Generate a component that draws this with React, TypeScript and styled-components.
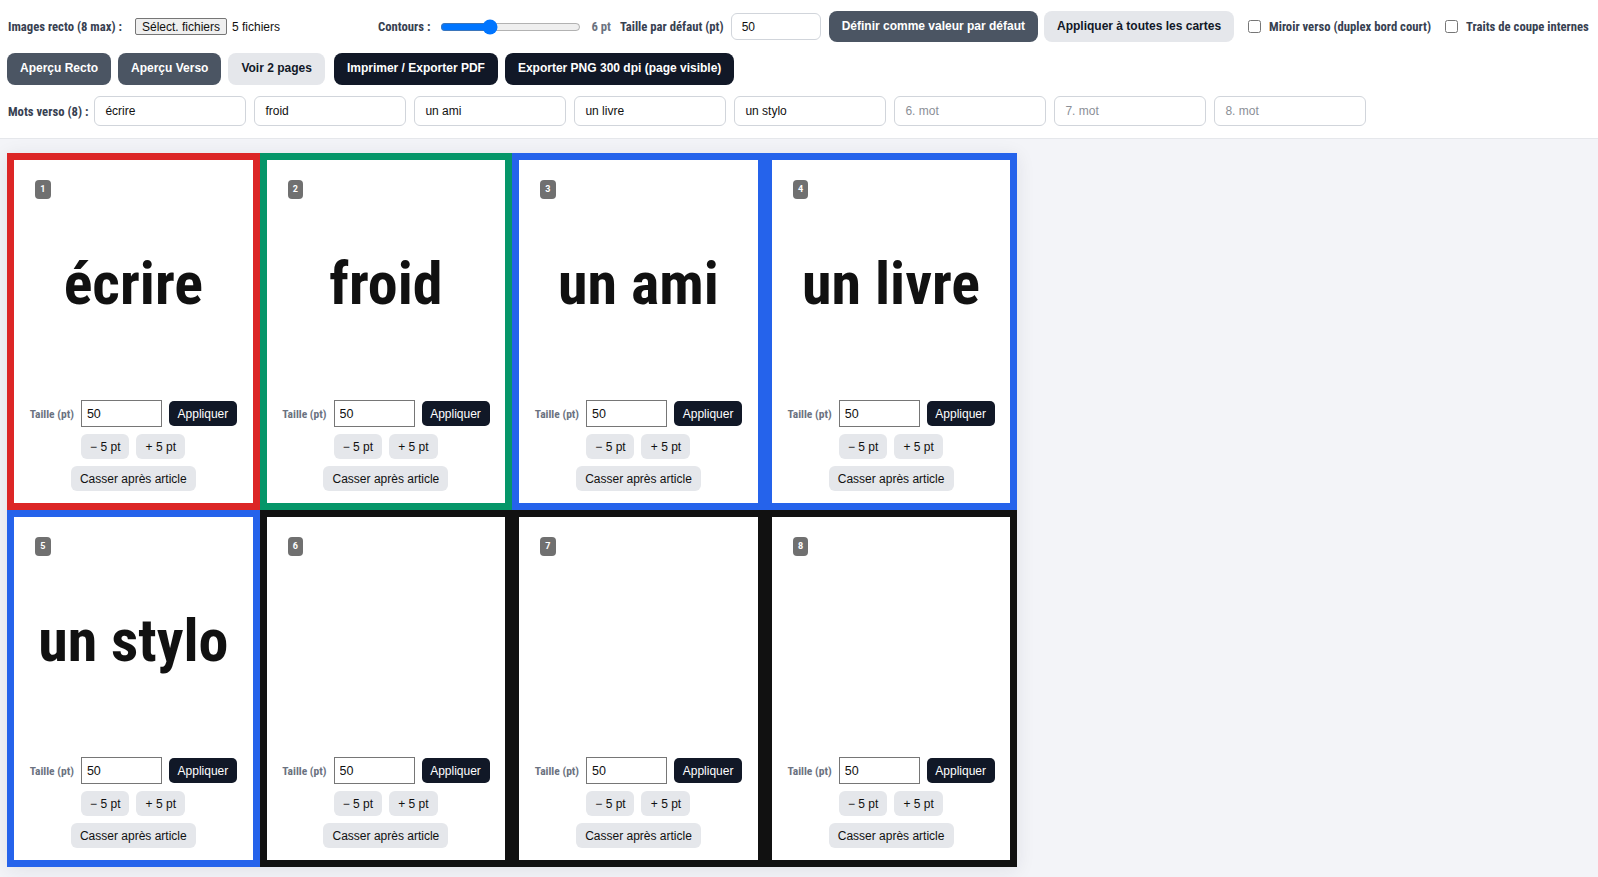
import React from "react";
import styled, { createGlobalStyle } from "styled-components";

const GlobalStyle = createGlobalStyle`
  html, body { margin: 0; padding: 0; }
  body {
    background: #f3f4f8;
    font-family: "Roboto Condensed", "Liberation Sans Narrow", Roboto, sans-serif;
    color: #111827;
  }
  * { box-sizing: border-box; }
`;

const Header = styled.header`
  background: #fff;
  border-bottom: 1px solid #e5e7eb;
  padding: 11px 8px 12px;
  display: flex;
  flex-direction: column;
  gap: 11px;
`;

const Row = styled.div<{ $gap?: number; $h?: number }>`
  display: flex;
  align-items: center;
  gap: ${(p) => p.$gap ?? 8}px;
  height: ${(p) => p.$h ?? 31}px;
`;

const Group = styled.div<{ $gap?: number; $ml?: number }>`
  display: flex;
  align-items: center;
  gap: ${(p) => p.$gap ?? 8}px;
  margin-left: ${(p) => p.$ml ?? 0}px;
`;

const Label = styled.span<{ $muted?: boolean }>`
  font-weight: 700;
  font-size: 12.7px;
  color: ${(p) => (p.$muted ? "#6b7280" : "#374151")};
  white-space: nowrap;
`;

const FileBox = styled.div`
  display: flex;
  align-items: center;
  gap: 5px;
  width: 232px;
  margin-left: 5px;
  font-family: "Liberation Sans", Arial, sans-serif;
  font-size: 12px;
  color: #111;
`;

const FileButton = styled.button`
  font-family: "Liberation Sans", Arial, sans-serif;
  font-size: 12px;
  height: 17px;
  padding: 0 6px;
  background: #efefef;
  border: 1px solid #767676;
  border-radius: 2px;
  color: #111;
`;

const Slider = styled.input`
  width: 141px;
  margin: 0;
  accent-color: #0075ff;
`;

const TextInput = styled.input<{ $w: number; $h: number }>`
  width: ${(p) => p.$w}px;
  height: ${(p) => p.$h}px;
  border: 1px solid #d1d5db;
  border-radius: 6px;
  padding: 0 10px;
  font-family: "Liberation Sans", Arial, sans-serif;
  font-size: 12px;
  color: #111;
  background: #fff;
  outline: none;
  &::placeholder { color: #8b8f97; }
`;

const Button = styled.button<{ $variant: "slate" | "light" | "dark"; $ml?: number }>`
  font-family: "Liberation Sans", Arial, sans-serif;
  font-weight: 700;
  font-size: 12px;
  line-height: 15px;
  padding: 8px 13px;
  margin-left: ${(p) => p.$ml ?? 0}px;
  border: none;
  border-radius: 8px;
  white-space: nowrap;
  background: ${(p) =>
    p.$variant === "slate" ? "#4b5563" : p.$variant === "dark" ? "#111827" : "#e5e7eb"};
  color: ${(p) => (p.$variant === "light" ? "#111827" : "#fff")};
`;

const RowButton = styled(Button)`
  padding: 8px 13px 9px;
`;

const Check = styled.label<{ $ml?: number }>`
  display: flex;
  align-items: center;
  gap: 8px;
  margin-left: ${(p) => p.$ml ?? 0}px;
  input { margin: 0; width: 13px; height: 13px; }
`;

const Main = styled.main`
  padding: 14px 7px 10px;
`;

const Sheet = styled.div`
  display: grid;
  grid-template-columns: repeat(4, 252.6px);
  grid-template-rows: repeat(2, 357px);
  width: 1010.4px;
  background: #fff;
  box-shadow: 0 3px 18px rgba(30, 30, 60, 0.09);
`;

const Card = styled.div<{ $color: string }>`
  position: relative;
  border: 7.2px solid ${(p) => p.$color};
  background: #fff;
  display: flex;
  flex-direction: column;
  padding-bottom: 12px;
`;

const Badge = styled.span`
  position: absolute;
  top: 20px;
  left: 21px;
  width: 15.5px;
  height: 18.5px;
  border-radius: 4px;
  background: #707070;
  color: #fff;
  font-family: Roboto, sans-serif;
  font-weight: 700;
  font-size: 9px;
  display: flex;
  align-items: center;
  justify-content: center;
`;

const WordArea = styled.div`
  flex: 1;
  display: flex;
  align-items: center;
  justify-content: center;
  padding-top: 6px;
`;

const Word = styled.span`
  font-weight: 700;
  font-size: 60px;
  color: #111;
  white-space: nowrap;
`;

const Controls = styled.div`
  display: flex;
  flex-direction: column;
  align-items: center;
  gap: 7px;
`;

const CtrlRow = styled.div<{ $gap: number }>`
  display: flex;
  align-items: center;
  gap: ${(p) => p.$gap}px;
`;

const SmallLabel = styled.span`
  font-weight: 700;
  font-size: 11.5px;
  color: #6b7280;
`;

const SizeInput = styled.input`
  width: 81px;
  height: 27px;
  border: 1px solid #767676;
  border-radius: 0;
  padding: 0 5px;
  font-family: "Liberation Sans", Arial, sans-serif;
  font-size: 12.5px;
  color: #111;
  outline: none;
`;

const SmallButton = styled.button<{ $dark?: boolean; $w: number }>`
  width: ${(p) => p.$w}px;
  height: 25px;
  padding: 0;
  border: none;
  border-radius: ${(p) => (p.$dark ? 5 : 6)}px;
  font-family: "Liberation Sans", Arial, sans-serif;
  font-size: 12px;
  background: ${(p) => (p.$dark ? "#111827" : "#e5e7eb")};
  color: ${(p) => (p.$dark ? "#fff" : "#111")};
  white-space: nowrap;
`;

const words = ["écrire", "froid", "un ami", "un livre", "un stylo", "", "", ""];
const colors = ["#dc2626", "#059669", "#2563eb", "#2563eb", "#2563eb", "#111111", "#111111", "#111111"];

export default function App() {
  return (
    <>
      <GlobalStyle />
      <Header>
        <Row $gap={8}>
          <Label>Images recto (8 max) :</Label>
          <FileBox>
            <FileButton>Sélect. fichiers</FileButton>
            <span>5 fichiers</span>
          </FileBox>
          <Group $gap={10} $ml={3}>
            <Label>Contours :</Label>
            <Slider type="range" min={1} max={16} defaultValue={6} />
            <Label $muted>6 pt</Label>
          </Group>
          <Group $gap={7} $ml={1}>
            <Label>Taille par défaut (pt)</Label>
            <TextInput $w={90} $h={27} defaultValue="50" />
          </Group>
          <Button $variant="slate">Définir comme valeur par défaut</Button>
          <Button $variant="light" $ml={-2}>Appliquer à toutes les cartes</Button>
          <Check $ml={6}>
            <input type="checkbox" />
            <Label>Miroir verso (duplex bord court)</Label>
          </Check>
          <Check $ml={6}>
            <input type="checkbox" />
            <Label>Traits de coupe internes</Label>
          </Check>
        </Row>
        <Row $gap={7} $h={32}>
          <RowButton $variant="slate" $ml={-1}>Aperçu Recto</RowButton>
          <RowButton $variant="slate">Aperçu Verso</RowButton>
          <RowButton $variant="light">Voir 2 pages</RowButton>
          <RowButton $variant="dark" $ml={2}>Imprimer / Exporter PDF</RowButton>
          <RowButton $variant="dark">Exporter PNG 300 dpi (page visible)</RowButton>
        </Row>
        <Row $gap={6} $h={30}>
          <Label>Mots verso (8) :</Label>
          <Group $gap={8}>
            {Array.from({ length: 8 }).map((_, i) => (
              <TextInput
                key={i}
                $w={152}
                $h={30}
                defaultValue={words[i]}
                placeholder={`${i + 1}. mot`}
              />
            ))}
          </Group>
        </Row>
      </Header>
      <Main>
        <Sheet>
          {words.map((w, i) => (
            <Card key={i} $color={colors[i]}>
              <Badge>{i + 1}</Badge>
              <WordArea>
                <Word>{w}</Word>
              </WordArea>
              <Controls>
                <CtrlRow $gap={7}>
                  <SmallLabel>Taille (pt)</SmallLabel>
                  <SizeInput defaultValue="50" />
                  <SmallButton $dark $w={68}>Appliquer</SmallButton>
                </CtrlRow>
                <CtrlRow $gap={7}>
                  <SmallButton $w={48}>− 5 pt</SmallButton>
                  <SmallButton $w={49}>+ 5 pt</SmallButton>
                </CtrlRow>
                <CtrlRow $gap={7}>
                  <SmallButton $w={125}>Casser après article</SmallButton>
                </CtrlRow>
              </Controls>
            </Card>
          ))}
        </Sheet>
      </Main>
    </>
  );
}
